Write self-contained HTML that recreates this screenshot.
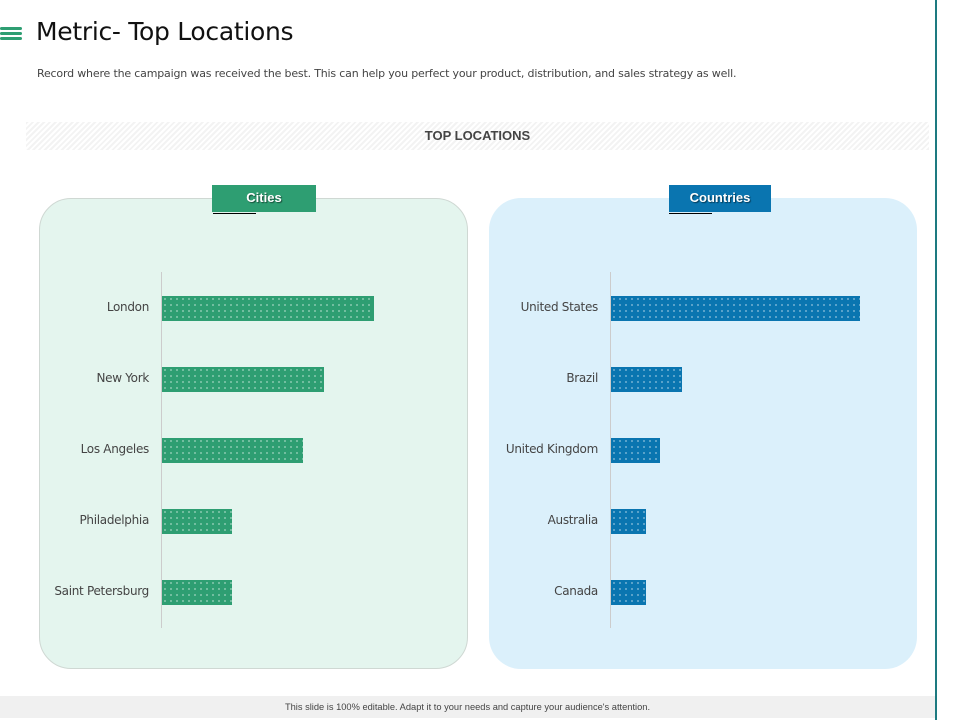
<!DOCTYPE html>
<html><head><meta charset="utf-8"><style>
*{margin:0;padding:0;box-sizing:border-box}
body{width:960px;height:720px;background:#fff;position:relative;overflow:hidden;font-family:"DejaVu Sans","Liberation Sans",sans-serif}
.abs{position:absolute}
h1{position:absolute;left:36px;top:17px;font-size:25px;font-weight:normal;color:#111;letter-spacing:-0.3px}
.sub{left:37px;top:67px;font-size:11px;color:#444;letter-spacing:-0.18px}
.band{left:26px;top:122px;width:903px;height:28px;background:repeating-linear-gradient(135deg,#f3f3f3 0 2px,#fff 2px 4px);text-align:center;line-height:28px;font-family:"Liberation Sans",sans-serif;font-weight:bold;font-size:13px;color:#444}
.panel{top:198px;height:471px;border-radius:32px}
.tab{top:185px;height:27px;color:#fff;font-family:"Liberation Sans",sans-serif;font-weight:bold;font-size:13px;text-align:center;line-height:26px;text-shadow:1px 1px 1px rgba(0,0,0,.5)}
.ul{top:213px;width:43px;height:1px;background:#000}
.axis{top:272px;height:356px;width:1px;background:#ccc}
.bar{height:25px}
.g{background-color:#2e9e72;background-image:radial-gradient(circle,rgba(255,255,255,.75) 0.6px,transparent 0.9px);background-size:6px 6px}
.b{background-color:#0a75b0;background-image:radial-gradient(circle,rgba(255,255,255,.75) 0.6px,transparent 0.9px);background-size:6px 6px}
.lbl{font-size:12px;color:#444;text-align:right;width:140px;letter-spacing:-0.3px}
.hb{left:0;width:22px;height:3px;background:#2e9e72;border-radius:2px}
</style></head><body>
<div class="abs hb" style="top:27px"></div>
<div class="abs hb" style="top:32px"></div>
<div class="abs hb" style="top:37px"></div>
<h1>Metric- Top Locations</h1>
<div class="abs sub">Record where the campaign was received the best. This can help you perfect your product, distribution, and sales strategy as well.</div>
<div class="abs band">TOP LOCATIONS</div>

<div class="abs panel" style="left:39px;width:429px;background:#e4f5ee;border:1px solid #cfd8d3"></div>
<div class="abs panel" style="left:489px;width:428px;background:#dbf0fb"></div>
<div class="abs tab" style="left:212px;width:104px;background:#2e9e72">Cities</div>
<div class="abs ul" style="left:213px"></div>
<div class="abs tab" style="left:669px;width:102px;background:#0a75b0">Countries</div>
<div class="abs ul" style="left:669px"></div>

<div class="abs axis" style="left:161px"></div>
<div class="abs axis" style="left:610px"></div>

<div class="abs lbl" style="left:9px;top:300px">London</div>
<div class="abs lbl" style="left:9px;top:371px">New York</div>
<div class="abs lbl" style="left:9px;top:442px">Los Angeles</div>
<div class="abs lbl" style="left:9px;top:513px">Philadelphia</div>
<div class="abs lbl" style="left:9px;top:584px">Saint Petersburg</div>
<div class="abs bar g" style="left:162px;top:296px;width:212px"></div>
<div class="abs bar g" style="left:162px;top:367px;width:162px"></div>
<div class="abs bar g" style="left:162px;top:438px;width:141px"></div>
<div class="abs bar g" style="left:162px;top:509px;width:70px"></div>
<div class="abs bar g" style="left:162px;top:580px;width:70px"></div>

<div class="abs lbl" style="left:458px;top:300px">United States</div>
<div class="abs lbl" style="left:458px;top:371px">Brazil</div>
<div class="abs lbl" style="left:458px;top:442px">United Kingdom</div>
<div class="abs lbl" style="left:458px;top:513px">Australia</div>
<div class="abs lbl" style="left:458px;top:584px">Canada</div>
<div class="abs bar b" style="left:611px;top:296px;width:249px"></div>
<div class="abs bar b" style="left:611px;top:367px;width:71px"></div>
<div class="abs bar b" style="left:611px;top:438px;width:49px"></div>
<div class="abs bar b" style="left:611px;top:509px;width:35px"></div>
<div class="abs bar b" style="left:611px;top:580px;width:35px"></div>

<div class="abs" style="left:0;top:696px;width:935px;height:22px;background:#f0f0f0;text-align:center;line-height:22px;font-family:'Liberation Sans',sans-serif;font-size:9.3px;color:#444">This slide is 100% editable. Adapt it to your needs and capture your audience's attention.</div>
<div class="abs" style="left:935px;top:0;width:2px;height:720px;background:#1d7a80"></div>
</body></html>
